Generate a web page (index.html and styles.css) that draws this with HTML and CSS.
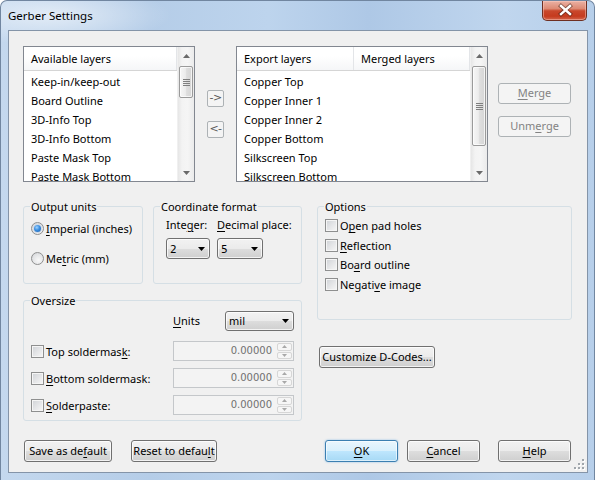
FILE: index.html
```html
<!DOCTYPE html>
<html>
<head>
<meta charset="utf-8">
<link rel="stylesheet" href="styles.css">
</head>
<body>
<div class="window">
  <div class="titlebar">
    <span class="title">Gerber Settings</span>
    <div class="close">
      <svg width="45" height="19" viewBox="0 0 45 19">
        <path d="M18 5 L27 13 M27 5 L18 13" stroke="#3a1a12" stroke-width="4.2" stroke-linecap="square" opacity="0.55"/>
        <path d="M18 5 L27 13 M27 5 L18 13" stroke="#ffffff" stroke-width="2.4" stroke-linecap="square"/>
      </svg>
    </div>
  </div>
  <div class="client">
    <div class="top-row">
      <div class="list avail">
        <div class="list-body">
          <div class="list-header"><div class="col c-full">Available layers</div></div>
          <div class="items">
            <div class="item">Keep-in/keep-out</div>
            <div class="item">Board Outline</div>
            <div class="item">3D-Info Top</div>
            <div class="item">3D-Info Bottom</div>
            <div class="item">Paste Mask Top</div>
            <div class="item">Paste Mask Bottom</div>
          </div>
        </div>
        <div class="vscroll">
          <div class="sb-arrow"><svg width="7" height="4"><path d="M0 4 L3.5 0 L7 4Z" fill="#6a6a6a"/></svg></div>
          <div class="thumb short"><svg width="7" height="7"><path d="M0 0.5H7M0 2.5H7M0 4.5H7M0 6.5H7" stroke="#7f7f7f" stroke-width="1"/></svg></div>
          <div class="sb-fill"></div>
          <div class="sb-arrow"><svg width="7" height="4"><path d="M0 0 L3.5 4 L7 0Z" fill="#6a6a6a"/></svg></div>
        </div>
      </div>
      <div class="arrows">
        <div class="sbtn">-&gt;</div>
        <div class="sbtn">&lt;-</div>
      </div>
      <div class="list export">
        <div class="list-body">
          <div class="list-header"><div class="col c1">Export layers</div><div class="col c2">Merged layers</div></div>
          <div class="items">
            <div class="item">Copper Top</div>
            <div class="item">Copper Inner 1</div>
            <div class="item">Copper Inner 2</div>
            <div class="item">Copper Bottom</div>
            <div class="item">Silkscreen Top</div>
            <div class="item">Silkscreen Bottom</div>
          </div>
        </div>
        <div class="vscroll">
          <div class="sb-arrow"><svg width="7" height="4"><path d="M0 4 L3.5 0 L7 4Z" fill="#6a6a6a"/></svg></div>
          <div class="thumb long"><svg width="7" height="7"><path d="M0 0.5H7M0 2.5H7M0 4.5H7M0 6.5H7" stroke="#7f7f7f" stroke-width="1"/></svg></div>
          <div class="sb-fill"></div>
          <div class="sb-arrow"><svg width="7" height="4"><path d="M0 0 L3.5 4 L7 0Z" fill="#6a6a6a"/></svg></div>
        </div>
      </div>
      <div class="merge-col">
        <div class="btn dis w73"><u>M</u>erge</div>
        <div class="btn dis w73">Unm<u>e</u>rge</div>
      </div>
    </div>

    <div class="mid">
      <div class="left-col">
        <div class="group-row">
          <fieldset class="group g-units">
            <legend>Output units</legend>
            <div class="gb gb-units">
              <div class="radio-row"><span class="radio on"><span class="dot"></span></span><span class="lbl"><u>I</u>mperial (inches)</span></div>
              <div class="radio-row r2"><span class="radio"></span><span class="lbl">Me<u>t</u>ric (mm)</span></div>
            </div>
          </fieldset>
          <fieldset class="group g-coord">
            <legend>Coordinate format</legend>
            <div class="gb gb-coord">
              <div class="coord-grid">
                <span class="clbl">Inte<u>g</u>er:</span>
                <span class="clbl"><u>D</u>ecimal place:</span>
                <div class="combo w44"><span class="val">2</span><svg width="7" height="4"><path d="M0 0 L3.5 4 L7 0Z" fill="#000"/></svg></div>
                <div class="combo w46"><span class="val">5</span><svg width="7" height="4"><path d="M0 0 L3.5 4 L7 0Z" fill="#000"/></svg></div>
              </div>
            </div>
          </fieldset>
        </div>
        <fieldset class="group g-over">
          <legend>Oversize</legend>
          <div class="gb gb-over">
            <div class="units-row">
              <span class="ulbl"><u>U</u>nits</span>
              <div class="combo w69"><span class="val">mil</span><svg width="7" height="4"><path d="M0 0 L3.5 4 L7 0Z" fill="#000"/></svg></div>
            </div>
            <div class="spin-row">
              <div class="spin-lbl"><span class="cb"></span><span class="lbl">Top soldermas<u>k</u>:</span></div>
              <div class="spin"><span class="sval">0.00000</span><div class="sarr"><div><svg width="5" height="3"><path d="M0 3 L2.5 0 L5 3Z" fill="#a8a8a8"/></svg></div><div><svg width="5" height="3"><path d="M0 0 L2.5 3 L5 0Z" fill="#a8a8a8"/></svg></div></div></div>
            </div>
            <div class="spin-row">
              <div class="spin-lbl"><span class="cb"></span><span class="lbl"><u>B</u>ottom soldermask:</span></div>
              <div class="spin"><span class="sval">0.00000</span><div class="sarr"><div><svg width="5" height="3"><path d="M0 3 L2.5 0 L5 3Z" fill="#a8a8a8"/></svg></div><div><svg width="5" height="3"><path d="M0 0 L2.5 3 L5 0Z" fill="#a8a8a8"/></svg></div></div></div>
            </div>
            <div class="spin-row">
              <div class="spin-lbl"><span class="cb"></span><span class="lbl"><u>S</u>olderpaste:</span></div>
              <div class="spin"><span class="sval">0.00000</span><div class="sarr"><div><svg width="5" height="3"><path d="M0 3 L2.5 0 L5 3Z" fill="#a8a8a8"/></svg></div><div><svg width="5" height="3"><path d="M0 0 L2.5 3 L5 0Z" fill="#a8a8a8"/></svg></div></div></div>
            </div>
          </div>
        </fieldset>
      </div>
      <div class="right-col">
        <fieldset class="group g-opts">
          <legend>Options</legend>
          <div class="gb gb-opts">
            <div class="opt-row"><span class="cb"></span><span class="lbl">O<u>p</u>en pad holes</span></div>
            <div class="opt-row"><span class="cb"></span><span class="lbl"><u>R</u>eflection</span></div>
            <div class="opt-row"><span class="cb"></span><span class="lbl">Bo<u>a</u>rd outline</span></div>
            <div class="opt-row"><span class="cb"></span><span class="lbl">Negati<u>v</u>e image</span></div>
          </div>
        </fieldset>
        <div class="btn dcodes">Customize D-Codes...</div>
      </div>
    </div>

    <div class="bottom">
      <div class="btn b-save">Save as de<u>f</u>ault</div>
      <div class="btn b-reset">Reset to defau<u>l</u>t</div>
      <div class="btn ok b-ok"><u>O</u>K</div>
      <div class="btn b-cancel"><u>C</u>ancel</div>
      <div class="btn b-help"><u>H</u>elp</div>
    </div>

    <svg class="grip" width="11" height="11" viewBox="0 0 11 11">
      <g fill="#ffffff"><rect x="9" y="1" width="2" height="2"/><rect x="9" y="5" width="2" height="2"/><rect x="5" y="5" width="2" height="2"/><rect x="9" y="9" width="2" height="2"/><rect x="5" y="9" width="2" height="2"/><rect x="1" y="9" width="2" height="2"/></g>
      <g fill="#a0a6ac"><rect x="8" y="0" width="2" height="2"/><rect x="8" y="4" width="2" height="2"/><rect x="4" y="4" width="2" height="2"/><rect x="8" y="8" width="2" height="2"/><rect x="4" y="8" width="2" height="2"/><rect x="0" y="8" width="2" height="2"/></g>
    </svg>
  </div>
</div>
</body>
</html>
```

FILE: styles.css
```css
* { box-sizing: border-box; }
html, body { margin: 0; padding: 0; }
body {
  width: 595px;
  height: 480px;
  overflow: hidden;
  background: #ffffff;
  font-family: "Noto Sans", "Open Sans", sans-serif;
  font-size: 11px;
  color: #000;
}
u { text-decoration-thickness: 1px; text-underline-offset: 2px; }

.window {
  width: 595px;
  height: 480px;
  border: 1px solid #7186a0;
  border-bottom: none;
  border-radius: 7px 7px 0 0;
  background:
    radial-gradient(ellipse 120px 30px at 50px 14px, rgba(255,255,255,0.55), rgba(255,255,255,0) 100%),
    linear-gradient(to right, #c4d8ee 0%, #b5cde8 25%, #bdd4ed 45%, #aec8e6 62%, #c0d6ee 85%, #b7cfea 100%);
  display: flex;
  flex-direction: column;
}

.titlebar {
  height: 29px;
  display: flex;
  align-items: flex-start;
  flex: none;
}
.title {
  padding-left: 7px;
  margin-top: 7px;
  font-size: 11.5px;
  line-height: 15px;
  color: #000;
}
.close {
  width: 45px;
  height: 20px;
  margin-left: auto;
  margin-right: 7px;
  border: 1px solid #6e2f22;
  border-top: none;
  border-radius: 0 0 5px 5px;
  background: linear-gradient(#eab1a4 0%, #dd8a74 40%, #c9482c 52%, #c53b1f 80%, #d3664c 100%);
  box-shadow: inset 0 0 0 1px rgba(255,210,200,0.45);
  overflow: hidden;
}
.close svg { display: block; }

.client {
  position: relative;
  margin: 0 6px 6px 7px;
  height: 443px;
  border: 1px solid #8494a8;
  background: #f0f0f0;
  flex: none;
}

/* top row */
.top-row {
  display: flex;
  align-items: flex-start;
  margin: 15px 0 0 14px;
  height: 136px;
}
.list {
  border: 1px solid #828790;
  background: #ffffff;
  display: flex;
  height: 136px;
}
.avail { width: 172px; }
.export { width: 252px; margin-left: 12px; }
.list-body { flex: 1; min-width: 0; overflow: hidden; }
.list-header {
  height: 24px;
  display: flex;
  background: linear-gradient(#ffffff 0%, #ffffff 40%, #f5f6f8 100%);
  border-bottom: 1px solid #d5d5d5;
}
.col {
  padding-left: 7px;
  line-height: 23px;
  border-right: 1px solid #e3e5e8;
  white-space: nowrap;
}
.c-full { flex: 1; }
.c1 { width: 117px; }
.c2 { flex: 1; }
.items { padding-top: 1px; }
.item {
  height: 19px;
  line-height: 19px;
  padding-left: 7px;
  white-space: nowrap;
}
.vscroll {
  width: 17px;
  display: flex;
  flex-direction: column;
  background: linear-gradient(to right, #e6e6e6 0%, #f3f3f3 25%, #f5f5f5 60%, #ebebeb 100%);
  border-left: 1px solid #f0f0f0;
}
.sb-arrow {
  height: 17px;
  display: flex;
  align-items: center;
  justify-content: center;
  flex: none;
}
.sb-arrow svg { display: block; }
.thumb {
  margin: 2px 1px 0 1px;
  border: 1px solid #9a9a9a;
  border-radius: 2px;
  background: linear-gradient(to right, #f6f6f6 0%, #ececec 45%, #dedede 55%, #d5d5d5 100%);
  box-shadow: inset 0 0 0 1px rgba(255,255,255,0.7);
  display: flex;
  align-items: center;
  justify-content: center;
  flex: none;
}
.thumb.short { height: 32px; }
.thumb.long { height: 80px; }
.thumb svg { display: block; }
.sb-fill { flex: 1; }

.arrows {
  margin-left: 12px;
  padding-top: 44px;
  display: flex;
  flex-direction: column;
  gap: 14px;
}
.sbtn {
  width: 17px;
  height: 17px;
  border: 1px solid #adb2b5;
  border-radius: 2px;
  background: #f4f4f4;
  color: #5a5a5a;
  font-family: "DejaVu Sans", sans-serif;
  font-size: 11px;
  line-height: 14px;
  text-align: center;
  letter-spacing: -0.5px;
}

.merge-col {
  margin-left: 10px;
  padding-top: 37px;
  display: flex;
  flex-direction: column;
  gap: 12px;
}

/* buttons */
.btn {
  height: 22px;
  border: 1px solid #707070;
  border-radius: 3px;
  background: linear-gradient(#f2f2f2 0%, #ebebeb 50%, #dddddd 51%, #cfcfcf 100%);
  box-shadow: inset 0 0 0 1px rgba(255,255,255,0.75);
  line-height: 19px;
  text-align: center;
  white-space: nowrap;
  color: #000;
}
.btn.dis {
  height: 21px;
  line-height: 18px;
  border-color: #adb2b5;
  background: #f4f4f4;
  box-shadow: none;
  color: #838383;
}
.w73 { width: 73px; }
.btn.ok {
  border-color: #3c7fb1;
  background: linear-gradient(#eaf6fd 0%, #d9f0fc 50%, #bee6fd 51%, #a7d9f5 100%);
  box-shadow: inset 0 0 0 1px rgba(255,255,255,0.6), 0 0 2px rgba(60,150,220,0.6);
}

/* mid */
.mid {
  display: flex;
  margin: 18px 0 0 14px;
}
.left-col { width: 279px; }
.right-col { margin-left: 15px; }
.group-row { display: flex; gap: 10px; }

.group {
  margin: 0;
  padding: 0;
  border: 1px solid #d5dfe5;
  border-radius: 3px;
  min-width: 0;
}
.group legend {
  margin-left: 6px;
  padding: 0 1px;
  line-height: 13px;
  height: 13px;
}

.g-units { width: 120px; height: 84px; }
.gb-units { padding: 7px 0 0 7px; }
.radio-row { display: flex; align-items: center; height: 16px; }
.radio-row.r2 { margin-top: 14px; }
.radio {
  width: 13px;
  height: 13px;
  border-radius: 50%;
  border: 1px solid #8e8f8f;
  background: radial-gradient(circle at 60% 65%, #f8f8f8 0%, #e2e3e5 60%, #c9ccd1 100%);
  display: flex;
  align-items: center;
  justify-content: center;
  flex: none;
}
.radio .dot {
  width: 7px;
  height: 7px;
  border-radius: 50%;
  background: radial-gradient(circle at 40% 35%, #9fd3ff 0%, #3a8ee0 45%, #1a5aa8 100%);
  box-shadow: 0 0 0 1px #cfd9e6;
}
.lbl { margin-left: 2px; white-space: nowrap; }

.g-coord { width: 149px; height: 84px; }
.gb-coord { padding: 4px 0 0 12px; }
.coord-grid {
  display: grid;
  grid-template-columns: 51px auto;
  grid-template-rows: 16px 21px;
  row-gap: 5px;
}
.clbl { line-height: 16px; white-space: nowrap; }

.combo {
  display: flex;
  align-items: center;
  height: 21px;
  border: 1px solid #707070;
  border-radius: 3px;
  background: linear-gradient(#f2f2f2 0%, #ebebeb 50%, #dddddd 51%, #cfcfcf 100%);
  box-shadow: inset 0 0 0 1px rgba(255,255,255,0.75);
  padding: 0 4px 0 3px;
  font-family: "DejaVu Sans", sans-serif;
  font-size: 10.5px;
}
.combo .val { flex: 1; }
.combo svg { display: block; flex: none; }
.w44 { width: 44px; }
.w46 { width: 46px; }
.w69 { width: 69px; height: 20px; }

.g-over { margin-top: 10px; height: 127px; }
.gb-over { padding: 4px 0 0 7px; }
.units-row { display: flex; align-items: center; height: 20px; padding-left: 142px; }
.ulbl { width: 52px; line-height: 16px; }
.spin-row { display: flex; align-items: center; height: 20px; margin-top: 7px; }
.units-row + .spin-row { margin-top: 10px; }
.spin-lbl { width: 142px; display: flex; align-items: center; }
.cb {
  width: 13px;
  height: 13px;
  border: 1px solid #8e8f8f;
  background: linear-gradient(135deg, #cfd2d6 0%, #e4e5e7 50%, #f7f7f7 100%);
  box-shadow: inset 0 0 0 1px #f5f5f5;
  flex: none;
  display: block;
}
.spin {
  width: 121px;
  height: 20px;
  border: 1px solid #c4c7ca;
  background: #f3f3f3;
  display: flex;
}
.sval {
  flex: 1;
  text-align: right;
  padding-right: 5px;
  color: #707070;
  font-family: "DejaVu Sans", sans-serif;
  font-size: 10px;
  line-height: 18px;
}
.sarr {
  width: 16px;
  display: flex;
  flex-direction: column;
  gap: 1px;
  padding: 1px 1px 1px 0;
}
.sarr div {
  flex: 1;
  border: 1px solid #d6d6d6;
  border-radius: 2px;
  background: #f6f6f6;
  display: flex;
  align-items: center;
  justify-content: center;
}
.sarr svg { display: block; }

.g-opts { width: 255px; height: 120px; }
.gb-opts { padding: 3px 0 0 7px; }
.opt-row { display: flex; align-items: center; height: 19.5px; }

.dcodes { width: 116px; margin: 26px 0 0 2px; }

/* bottom */
.bottom {
  display: flex;
  margin: 19px 0 0 15px;
}
.b-save { width: 88px; }
.b-reset { width: 86px; margin-left: 19px; }
.b-ok { width: 73px; margin-left: 108px; }
.b-cancel { width: 73px; margin-left: 9px; }
.b-help { width: 73px; margin-left: 18px; }

.grip {
  position: absolute;
  right: 2px;
  bottom: 2px;
  display: block;
}
```
